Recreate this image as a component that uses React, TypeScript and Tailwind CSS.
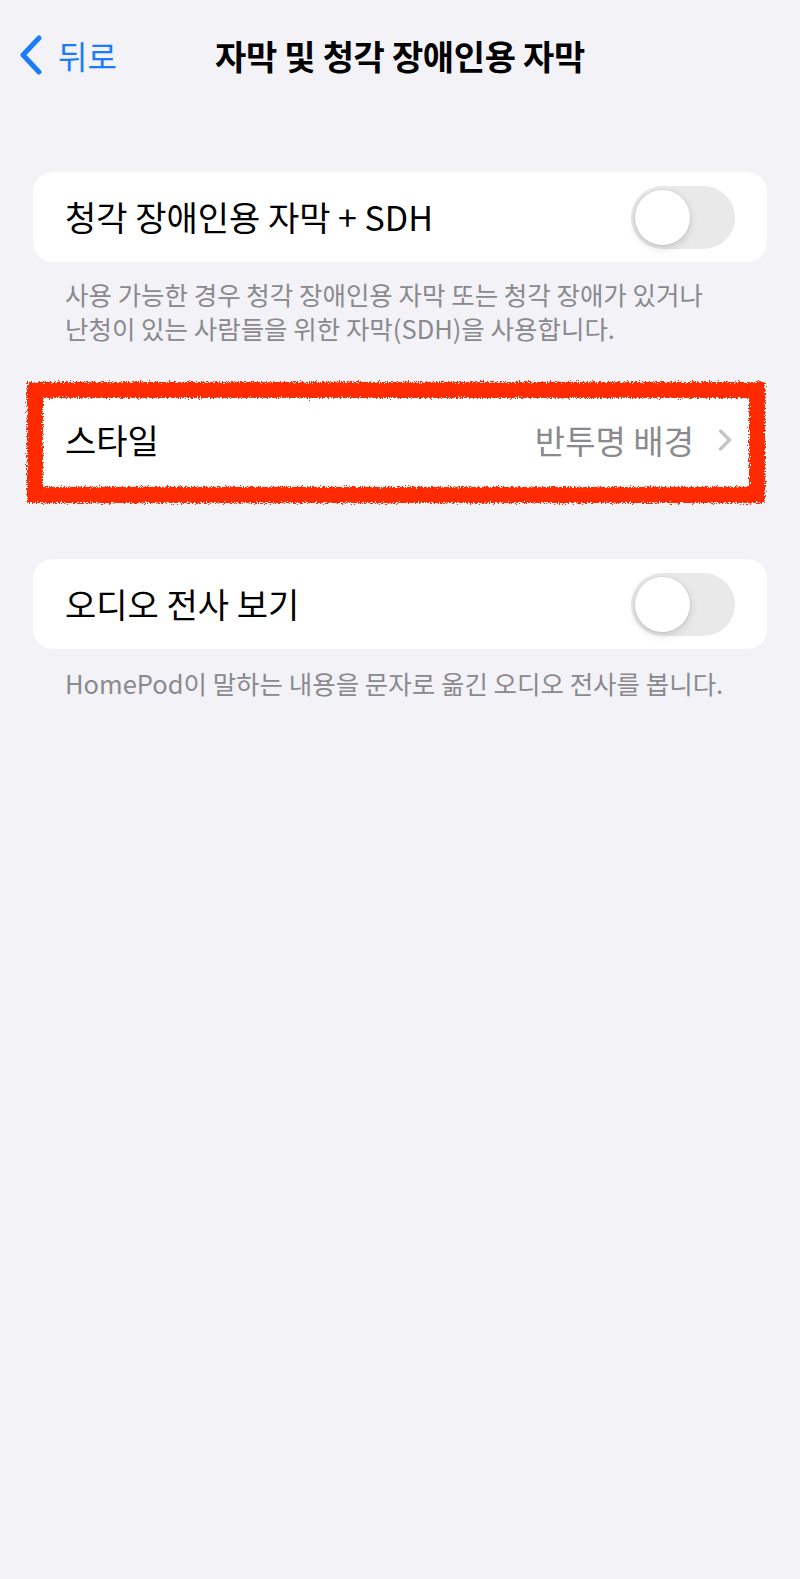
import React from "react";

function Toggle() {
  return (
    <div className="w-[104px] h-[63px] rounded-full bg-[#e9e9ea] p-[4px] flex items-center">
      <div className="w-[55px] h-[55px] rounded-full bg-white shadow-[0_3px_8px_rgba(0,0,0,0.15),0_0_0_1px_rgba(0,0,0,0.04)]" />
    </div>
  );
}

export default function App() {
  return (
    <div
      className="w-[800px] min-h-[1579px] bg-[#f2f2f7] text-black"
      style={{ fontFamily: '"Noto Sans CJK KR", "Noto Sans", sans-serif' }}
    >
      {/* Nav bar */}
      <div className="relative h-[111px] flex items-center justify-center">
        <div className="absolute left-[18px] top-[35px] flex items-center gap-[14px] text-[#1a7cf8]">
          <svg width="26" height="40" viewBox="0 0 26 40" fill="none">
            <path d="M21 3 L5 20 L21 37" stroke="#1a7cf8" strokeWidth="5" strokeLinecap="round" strokeLinejoin="round" />
          </svg>
          <span className="text-[32px] leading-none">뒤로</span>
        </div>
        <div className="text-[34px] font-bold leading-none tracking-[-0.01em]">자막 및 청각 장애인용 자막</div>
      </div>

      <div className="mt-[61px]">
        <div className="mx-[33px] h-[90px] rounded-[20px] bg-white pl-[32px] pr-[32px] flex items-center justify-between">
          <span className="text-[34px] leading-none">청각 장애인용 자막 + SDH</span>
          <Toggle />
        </div>
        <div className="mx-[33px] px-[32px] pt-[15px] text-[25.5px] leading-[34px] text-[#8a8a8e] whitespace-nowrap">
          <div>사용 가능한 경우 청각 장애인용 자막 또는 청각 장애가 있거나</div>
          <div>난청이 있는 사람들을 위한 자막(SDH)을 사용합니다.</div>
        </div>
      </div>

      <div className="mt-[50px] mx-[33px] relative">
        <div className="h-[90px] rounded-[20px] bg-white pl-[32px] pr-[35px] flex items-center justify-between">
          <span className="text-[34px] leading-none">스타일</span>
          <div className="flex items-center gap-[24px]">
            <span className="text-[33px] leading-none text-[#8a8a8e]">반투명 배경</span>
            <svg width="14" height="22" viewBox="0 0 14 22" fill="none">
              <path d="M2.5 2 L11.5 11 L2.5 20" stroke="#c4c4c7" strokeWidth="3.2" strokeLinecap="round" strokeLinejoin="round" />
            </svg>
          </div>
        </div>
        <svg className="absolute left-[-8px] top-[-16px] pointer-events-none" width="742" height="127" viewBox="0 0 742 127">
          <defs>
            <filter id="rough" x="-5%" y="-20%" width="110%" height="140%">
              <feTurbulence type="fractalNoise" baseFrequency="0.9" numOctaves="2" seed="3" result="n" />
              <feDisplacementMap in="SourceGraphic" in2="n" scale="7" xChannelSelector="R" yChannelSelector="G" />
            </filter>
          </defs>
          <rect x="10" y="11" width="722" height="105" fill="none" stroke="#ff2a05" strokeWidth="16" filter="url(#rough)" />
        </svg>
      </div>

      <div className="mt-[74px]">
        <div className="mx-[33px] h-[90px] rounded-[20px] bg-white pl-[32px] pr-[32px] flex items-center justify-between">
          <span className="text-[34px] leading-none">오디오 전사 보기</span>
          <Toggle />
        </div>
        <div className="mx-[33px] px-[32px] pt-[17px] text-[25.5px] leading-[34px] text-[#8a8a8e] whitespace-nowrap">
          HomePod이 말하는 내용을 문자로 옮긴 오디오 전사를 봅니다.
        </div>
      </div>
    </div>
  );
}
